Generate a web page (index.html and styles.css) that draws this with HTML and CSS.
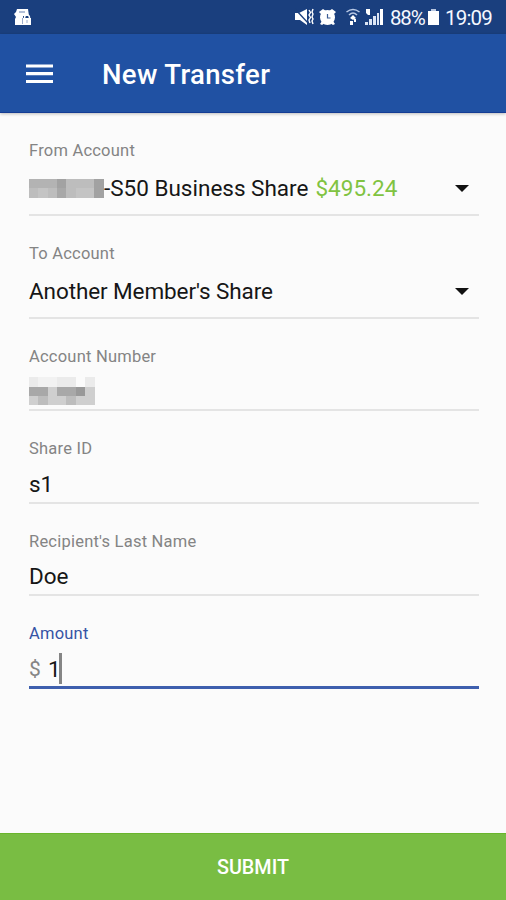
FILE: index.html
```html
<!DOCTYPE html>
<html lang="en">
<head>
<meta charset="utf-8">
<title>New Transfer</title>
<link rel="stylesheet" href="styles.css">
</head>
<body>
<div class="status">
  <svg class="notice" width="18" height="18" viewBox="0 0 18 18"><path fill="#fff" d="M3 1h11l1 7H9v9H1v-6l1-2-2-3 2-2z"/><path stroke="#8196be" stroke-width="1.200" d="M5 4h6"/><path fill="#fff" d="M9 10h8v7H9z"/><path fill="none" stroke="#fff" stroke-width="1.500" d="M10.500 10c0-4 5-4 5 0"/><path fill="none" stroke="#9aabcb" d="M8.500 16v-6M13 12v3"/></svg>
  <div class="tray">
    <svg width="89" height="20" viewBox="0 0 89 20">
      <g fill="#fff">
        <path d="M0 6h4l8-4v16l-7-5H0z"/>
        <circle cx="32.500" cy="10.500" r="7.500"/><path d="M24 5l4-3 3 2-4 4zM41 5l-4-3-3 2 4 4zM27 14l-2 3 2 1 3-2zM38 14l2 3-2 1-3-2z"/>
        <path d="M58 8l3 3-3 2-3-2zM55 14h3v4h-3zM59 12h2v3h-2z"/>
        <path d="M71 2h4v6h-2l-2-2zM85 2h3v16h-3z"/>
      </g>
      <path fill="#dce5f4" d="M70 15h3v3h-3zM74 12h3v6h-3zM78 9h3v9h-3zM82 6h2v12h-2z"/>
      <path d="M0 2l14 15" stroke="#1b3f7c" stroke-width="1.300"/>
      <path d="M14 3l1.500 2.500-1.500 2.500 1.500 2.500-1.500 2.500 1 3M18 2l-1 3 1 2-1 3 1 2-1 2 1 3" fill="none" stroke="#fff" stroke-width="1.400"/>
      <path d="M32.500 7v4h3" fill="none" stroke="#3b5c94" stroke-width="1.200"/>
      <path d="M51.500 5q6.500-5 13 0M54 8q4-4 8 0" fill="none" stroke="#b9c9e5" stroke-width="1.500"/>
    </svg>
    <span class="percent">88%</span>
    <svg class="battery" width="11" height="16" viewBox="0 0 11 16"><path fill="#b8c6df" d="M3 0h5v2H3z"/><path fill="#fff" d="M0 2h11v14H0z"/></svg>
    <span class="clock">19:09</span>
  </div>
</div>
<header class="bar">
  <svg class="menu" width="27" height="20" viewBox="0 0 27 20"><path stroke="#fff" stroke-width="3.200" d="M0 2h27M0 9.700h27M0 17.500h27"/></svg>
  <h1>New Transfer</h1>
</header>
<main class="form">
  <div class="field select">
    <div class="label">From Account</div>
    <div class="value">
      <svg class="mask" width="75" height="19" viewBox="0 0 75 19" shape-rendering="crispEdges"><path fill="#b3b3b3" d="M0 0h75v19H0z"/><path fill="#bdbdbd" d="M0 9h9v10H0zM19 9h9v10h-9zM37 0h28v19H37z"/><path fill="#c4c4c4" d="M9 9h10v10H9zM47 9h18v10H47z"/><path fill="#a2a2a2" d="M28 0h9v19h-9zM65 0h10v19H65z"/><path fill="#a8a8a8" d="M28 9h9v10h-9z"/></svg><span class="share">-S50 Business Share</span><span class="money">$495.24</span>
      <i class="arrow"></i>
    </div>
  </div>
  <div class="field select">
    <div class="label">To Account</div>
    <div class="value"><span class="another">Another Member's Share</span><i class="arrow"></i></div>
  </div>
  <div class="field">
    <div class="label">Account Number</div>
    <div class="value">
      <svg class="mask number-mask" width="66" height="28" viewBox="0 0 66 28" shape-rendering="crispEdges"><path fill="#ebebeb" d="M0 0h9v10H0zM28 0h19v10H28zM56 0h10v10H56z"/><path fill="#f2f2f2" d="M9 0h19v10H9z"/><path fill="#a8a8a8" d="M0 10h19v9H0zM28 10h28v9H28z"/><path fill="#999" d="M47 10h9v9h-9z"/><path fill="#cfcfcf" d="M19 10h9v18h-9zM0 19h9v9H0zM28 19h9v9h-9zM47 19h9v9h-9zM56 10h10v18H56z"/><path fill="#bdbdbd" d="M9 19h10v9H9zM37 19h10v9H37z"/></svg>
    </div>
  </div>
  <div class="field">
    <div class="label">Share ID</div>
    <div class="value">s1</div>
  </div>
  <div class="field">
    <div class="label">Recipient's Last Name</div>
    <div class="value">Doe</div>
  </div>
  <div class="field active">
    <div class="label">Amount</div>
    <div class="value"><span class="currency">$</span>1<i class="caret"></i></div>
  </div>
</main>
<button class="submit">SUBMIT</button>
</body>
</html>
```
FILE: styles.css
```css
* { box-sizing: border-box; }
body {
  margin: 0;
  height: 900px;
  display: flex;
  flex-direction: column;
  background: #fbfbfb;
  font-family: Roboto, "Liberation Sans", sans-serif;
  color: #161616;
  overflow: hidden;
}
svg { display: block; flex: none; }
.status {
  height: 34px;
  flex: none;
  display: flex;
  justify-content: space-between;
  align-items: center;
  padding: 0 14px;
  background: #1a3f7e;
  color: #f5f8ff;
}
.tray { display: flex; align-items: center; font-size: 20.500px; line-height: 34px; }
.percent { margin: 1px 0 0 6px; width: 35px; letter-spacing: -1.2px; white-space: nowrap; }
.battery { margin-left: 3px; }
.clock { margin: 1px 0 0 6px; width: 47px; letter-spacing: -0.800px; white-space: nowrap; }
.bar {
  height: 79px;
  flex: none;
  display: flex;
  align-items: center;
  padding: 0 27px 0 26px;
  background: #2051a3;
  border-bottom: 1px solid #153c94;
  box-shadow: 0 1px 3px rgba(0, 0, 0, .25);
  color: #fff;
}
h1 { margin: 3px 0 0 49px; font-size: 27.500px; font-weight: 500; line-height: 34px; letter-spacing: .35px; }
.menu { margin-top: 1px; }
.form { flex: 1; padding: 28.400px 27px 0 29px; }
.field { height: 64.500px; margin-bottom: 27.900px; border-bottom: 2px solid #e4e4e4; }
.select { height: 74.900px; }
.label { height: 20px; font-size: 16.500px; line-height: 20px; letter-spacing: .22px; color: #848484; }
.value { height: 30px; margin-top: 9.500px; display: flex; align-items: center; font-size: 22.500px; line-height: 30px; white-space: pre; }
.select .value { margin-top: 12px; }
.number-mask { margin-top: -1px; }
.another { letter-spacing: -.1px; }
.money { margin-left: 7px; color: #80c341; }
.arrow { margin: 0 10px 0 auto; border: 7px solid transparent; border-top-color: #111; border-bottom: 0; }
.active { border-bottom: 3px solid #3e5fae; }
.active .label { color: #3553a4; }
.currency { width: 19px; font-size: 21px; color: #858585; }
.caret { width: 3px; height: 31px; background: #858585; margin-left: -2px; }
.submit {
  height: 67px;
  flex: none;
  border: 0;
  border-top: 1px solid #6ab52c;
  background: #79bd43;
  color: #fff;
  font: 500 19.800px/66px Roboto, sans-serif;
}
```
